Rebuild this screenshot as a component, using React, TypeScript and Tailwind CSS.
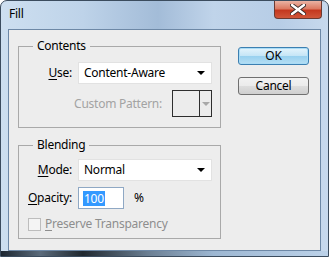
import React from "react";

// ── Small pieces ───────────────────────────────────────────────────────────
function Arrow({ color = "#000" }: { color?: string }) {
  return (
    <svg width="8" height="4" viewBox="0 0 8 4">
      <polygon points="0,0 8,0 4,4" fill={color} />
    </svg>
  );
}

function CloseGlyph() {
  return (
    <svg width="16" height="11" viewBox="0 0 16 11">
      <path
        d="M2 1 L14 10 M14 1 L2 10"
        stroke="#3a2a28"
        strokeWidth="4.2"
        strokeLinecap="round"
      />
      <path
        d="M2 1 L14 10 M14 1 L2 10"
        stroke="#ffffff"
        strokeWidth="2.4"
        strokeLinecap="round"
      />
    </svg>
  );
}

// ── Main ───────────────────────────────────────────────────────────────────
export default function App() {
  return (
    <div
      className="w-[329px] h-[257px] flex flex-col rounded-t-[7px] border border-[#3b4c5e] bg-[linear-gradient(90deg,#cddff0_0%,#bed3e9_25%,#a3bcd8_48%,#c0d4ea_65%,#b7cde6_85%,#c7d9ed_100%)] text-[12px] tracking-[-0.25px] text-black overflow-hidden"
      style={{ fontFamily: '"Noto Sans", "Open Sans", sans-serif' }}
    >
      {/* Title bar */}
      <div className="h-[28px] flex items-start justify-between">
        <span className="ml-[8px] mt-[5px] leading-[16px]">Fill</span>
        <div className="mr-[6px] w-[48px] h-[18px] rounded-b-[4px] border border-t-0 border-[#6b3a32] bg-[linear-gradient(180deg,#eab3a3_0%,#dc7a62_45%,#c4381f_55%,#d0563a_100%)] flex items-center justify-center">
          <CloseGlyph />
        </div>
      </div>

      {/* Client area */}
      <div className="mx-[7px] h-[222px] border border-[#6d88a6] bg-[#ededed] flex items-start pl-[9px] pt-[9px]">
        {/* Left: group boxes */}
        <div className="w-[203px] flex flex-col">
          <fieldset className="border border-[#a9a9a9] px-0 pt-[9px] pb-[10px]">
            <legend className="ml-[14px] px-[4px] leading-[14px]">Contents</legend>
            <div className="flex items-center">
              <span className="w-[53px] text-right leading-[14px]">
                <span className="underline underline-offset-2">U</span>se:
              </span>
              <div className="ml-[6px] w-[134px] h-[22px] bg-white border border-[#e2e2e2] flex items-center justify-between pl-[5px] pr-[6px]">
                <span className="leading-[14px]">Content-Aware</span>
                <Arrow />
              </div>
            </div>
            <div className="mt-[6px] flex items-center justify-end gap-[10px] pr-[8px]">
              <span className="text-[#a3a3a3] leading-[14px]">Custom Pattern:</span>
              <div className="w-[40px] h-[27px] border border-[#2e2e2e] bg-[#ececec] flex">
                <div className="flex-1" />
                <div className="w-[12px] border-l border-[#2e2e2e] flex items-center justify-center">
                  <Arrow color="#a8a8a8" />
                </div>
              </div>
            </div>
          </fieldset>

          <fieldset className="mt-[10px] border border-[#a9a9a9] px-0 pt-[7px] pb-[7px]">
            <legend className="ml-[14px] px-[4px] leading-[14px]">Blending</legend>
            <div className="flex items-center">
              <span className="w-[53px] text-right leading-[14px]">
                <span className="underline underline-offset-2">M</span>ode:
              </span>
              <div className="ml-[6px] w-[134px] h-[22px] bg-white border border-[#e2e2e2] flex items-center justify-between pl-[5px] pr-[6px]">
                <span className="leading-[14px]">Normal</span>
                <Arrow />
              </div>
            </div>
            <div className="mt-[6px] flex items-center">
              <span className="w-[53px] text-right leading-[14px]">
                <span className="underline underline-offset-2">O</span>pacity:
              </span>
              <div className="ml-[6px] w-[46px] h-[22px] bg-white border border-[#8fa8c4] flex items-center pl-[4px]">
                <span className="bg-[#3399ff] text-white leading-[15px] px-[1px]">100</span>
              </div>
              <span className="ml-[10px] leading-[14px]">%</span>
            </div>
            <div className="mt-[8px] flex items-center pl-[9px] gap-[4px]">
              <div className="w-[13px] h-[13px] border border-[#bdbdbd] bg-[#f4f4f4]" />
              <span className="text-[#8e8e8e] leading-[14px]">
                <span className="underline underline-offset-2">P</span>reserve Transparency
              </span>
            </div>
          </fieldset>
        </div>

        {/* Right: buttons */}
        <div className="ml-[17px] mt-[8px] flex flex-col gap-[12px]">
          <button className="w-[71px] h-[18px] rounded-[3px] border border-[#3c7fb1] bg-[linear-gradient(180deg,#e5f4fc_0%,#c4e5f6_50%,#98d1ef_51%,#b6def4_100%)] shadow-[inset_0_0_0_1px_#a9dcf6] flex items-center justify-center leading-[14px]">
            OK
          </button>
          <button className="w-[71px] h-[18px] rounded-[3px] border border-[#707070] bg-[linear-gradient(180deg,#f2f2f2_0%,#ebebeb_50%,#dddddd_51%,#cfcfcf_100%)] flex items-center justify-center leading-[14px]">
            Cancel
          </button>
        </div>
      </div>

      {/* Bottom frame */}
      <div className="flex-1 bg-[linear-gradient(90deg,#1c2630_0%,#5b6b7b_12%,#20282f_25%,#6b7f93_45%,#9db7d2_65%,#bcd2e9_100%)]" />
    </div>
  );
}
